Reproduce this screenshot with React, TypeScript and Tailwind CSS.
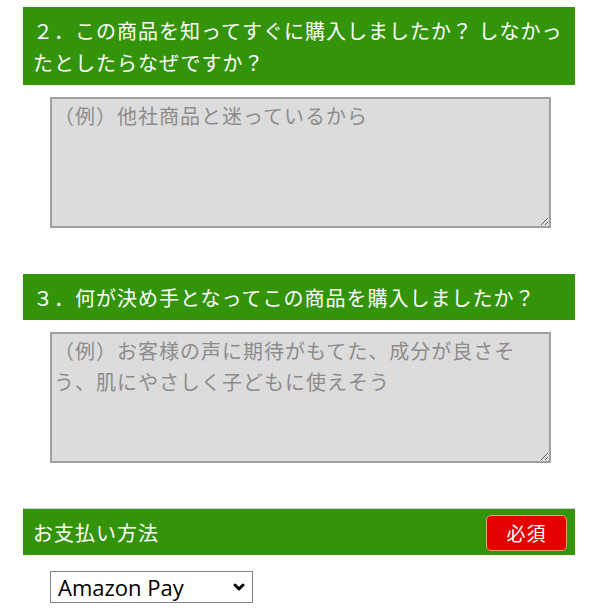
import { ChevronDown } from "lucide-react";

const jp = "font-['Meiryo','Noto_Sans_CJK_JP',sans-serif]";

function SectionHeader({ children, required }: { children: React.ReactNode; required?: boolean }) {
  return (
    <div className="flex items-center justify-between bg-[#349409] pl-[10px] pr-[8px] pt-[8px] pb-[6px]">
      <h2 className={`${jp} text-[20px] leading-[32px] tracking-[1px] text-white font-normal`}>{children}</h2>
      {required && (
        <span className={`${jp} -my-[2px] flex h-[36px] w-[81px] items-center justify-center rounded-[5px] border border-[#e3a37a] bg-[#e60000] text-[19px] tracking-[1px] text-white`}>
          必須
        </span>
      )}
    </div>
  );
}

function AnswerBox({ placeholder }: { placeholder: string }) {
  return (
    <div className="pl-[27px]">
      <textarea
        placeholder={placeholder}
        className={`${jp} block h-[131px] w-[501px] border-2 border-[#a0a0a0] bg-[#dcdcdc] pl-[2px] pr-[22px] pt-[1px] text-[20px] leading-[31px] tracking-[1px] text-[#333] placeholder:text-[#8c8c8c] outline-none`}
      />
    </div>
  );
}

export default function App() {
  return (
    <div className="w-[598px] bg-white px-[23px] pt-[7px] pb-[8px]">
      <SectionHeader>２．この商品を知ってすぐに購入しましたか？ しなかったとしたらなぜですか？</SectionHeader>
      <div className="mt-[12px]">
        <AnswerBox placeholder="（例）他社商品と迷っているから" />
      </div>

      <div className="mt-[46px]">
        <SectionHeader>３．何が決め手となってこの商品を購入しましたか？</SectionHeader>
      </div>
      <div className="mt-[12px]">
        <AnswerBox placeholder="（例）お客様の声に期待がもてた、成分が良さそう、肌にやさしく子どもに使えそう" />
      </div>

      <div className="mt-[45px] border-t border-[#cfcfcf]">
        <SectionHeader required>お支払い方法</SectionHeader>
      </div>
      <div className="mt-[16px] pl-[27px]">
        <div className="relative w-[203px]">
          <select
            defaultValue="amazon"
            className="block h-[32px] w-[203px] appearance-none border border-[#808080] bg-white pl-[7px] font-['Open_Sans',sans-serif] text-[22px] leading-[30px] text-black outline-none"
          >
            <option value="amazon">Amazon Pay</option>
            <option value="card">クレジットカード</option>
            <option value="cod">代金引換</option>
          </select>
          <ChevronDown className="pointer-events-none absolute right-[6px] top-[8px] h-[16px] w-[16px] text-black" strokeWidth={4.5} />
        </div>
      </div>
    </div>
  );
}
